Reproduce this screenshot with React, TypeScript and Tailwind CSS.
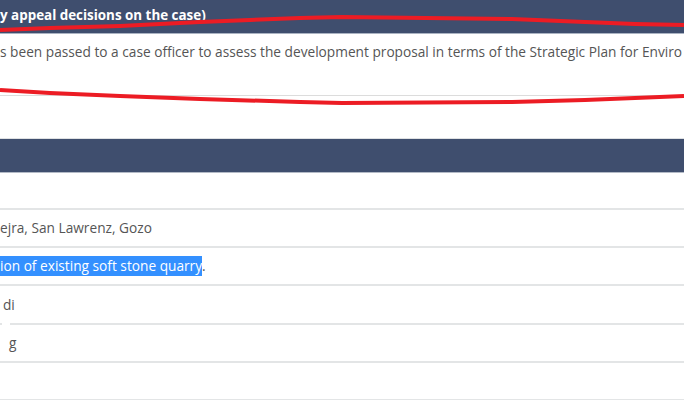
import React from "react";

export default function App() {
  return (
    <div className="relative w-[684px] h-[400px] overflow-hidden bg-white font-['Open_Sans',sans-serif] text-[13.7px] text-[#555]">
      {/* top header */}
      <div className="h-[33px] bg-[#3f4e6e] flex items-center whitespace-nowrap text-white font-bold text-[13.4px] pb-[2px]">
        y appeal decisions on the case)
      </div>
      <div className="h-[1px] bg-[#aab3c2]" />
      {/* description */}
      <div className="h-[62px] border-b border-[#dcdcdc] pt-[8px] whitespace-nowrap leading-[20px] overflow-hidden">
        s been passed to a case officer to assess the development proposal in terms of the Strategic Plan for Enviro
      </div>
      <div className="h-[42px]" />
      {/* second header */}
      <div className="h-[1px] bg-[#dfe1e3]" />
      <div className="h-[33px] bg-[#3f4e6e]" />
      <div className="h-[1px] bg-[#b3bac6]" />
      {/* rows */}
      <div className="flex flex-col">
        <div className="h-[37px] border-b-2 border-[#e3e5e6]" />
        <div className="h-[38px] border-b-2 border-[#e3e5e6] flex items-center whitespace-nowrap leading-[20px]">
          ejra, San Lawrenz, Gozo
        </div>
        <div className="h-[38px] border-b-2 border-[#e3e5e6] flex items-center whitespace-nowrap leading-[20px]">
          <span className="bg-[#3390ff] text-white">ion of existing soft stone quarry</span>
          <span>.</span>
        </div>
        <div className="h-[37px] flex items-center whitespace-nowrap leading-[20px] pl-[3px]">
          di
        </div>
        <div className="h-[2px] flex">
          <div className="w-[2px] bg-[#e3e5e6]" />
          <div className="w-[8px]" />
          <div className="flex-1 bg-[#e3e5e6]" />
        </div>
        <div className="h-[38px] border-b-2 border-[#e3e5e6] flex items-center whitespace-nowrap leading-[20px] pl-[9px]">
          g
        </div>
        <div className="h-[38px] border-b-2 border-[#e3e5e6]" />
      </div>

      {/* red annotation strokes */}
      <svg className="absolute left-0 top-0 pointer-events-none" width="684" height="400" viewBox="0 0 684 400">
        <polyline
          points="0,30 50,28 120,26 200,22 300,18 342,17 512,19 585,22 635,24 684,25"
          fill="none"
          stroke="#ec1c24"
          strokeWidth="4"
          strokeLinejoin="round"
        />
        <polyline
          points="0,90 50,93 120,96 200,99 300,102 342,103 512,102 585,100 635,98 684,96"
          fill="none"
          stroke="#ec1c24"
          strokeWidth="4"
          strokeLinejoin="round"
        />
      </svg>
    </div>
  );
}
